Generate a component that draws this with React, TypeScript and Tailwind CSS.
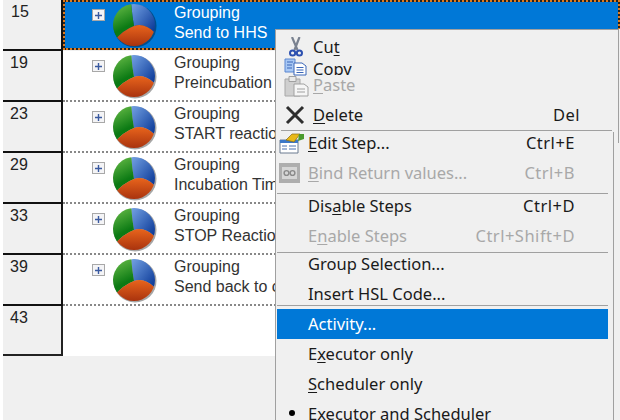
const rows = [
  { num: "15", label: "Send to HHS", selected: true },
  { num: "19", label: "Preincubation" },
  { num: "23", label: "START reaction" },
  { num: "29", label: "Incubation Time" },
  { num: "33", label: "STOP Reaction" },
  { num: "39", label: "Send back to cool" },
];

function Pie({ id }: { id: string }) {
  return (
    <svg width="48" height="48" viewBox="0 0 48 48" className="shrink-0">
      <defs>
        <linearGradient id={`${id}-g`} x1="0.3" y1="0" x2="0.6" y2="1">
          <stop offset="0" stopColor="#70c24c" />
          <stop offset="0.7" stopColor="#0c7a14" />
        </linearGradient>
        <linearGradient id={`${id}-b`} x1="0" y1="0" x2="1" y2="1">
          <stop offset="0" stopColor="#7aa8e8" />
          <stop offset="0.85" stopColor="#0c3a98" />
        </linearGradient>
        <linearGradient id={`${id}-r`} x1="0.5" y1="0" x2="0.5" y2="1">
          <stop offset="0" stopColor="#e8641c" />
          <stop offset="1" stopColor="#a02c0c" />
        </linearGradient>
        <clipPath id={`${id}-c`}>
          <circle cx="24" cy="24" r="21" />
        </clipPath>
      </defs>
      <circle cx="25" cy="25" r="21.5" fill="#000" opacity="0.35" />
      <g clipPath={`url(#${id}-c)`}>
        <path d="M24 25 Q22 14 21 0 H48 V35 Q36 21 24 25Z" fill={`url(#${id}-b)`} />
        <path d="M24 25 Q22 14 21 0 H0 V40 H4 Q13 29 24 25Z" fill={`url(#${id}-g)`} />
        <path d="M24 25 Q36 21 48 35 V48 H0 V44 L4 40 Q13 29 24 25Z" fill={`url(#${id}-r)`} />
      </g>
    </svg>
  );
}

function PlusBox() {
  return (
    <div className="flex h-[12px] w-[13px] items-center justify-center border border-[#a8a8a8] bg-[#f4f4f6]">
      <svg width="9" height="9" viewBox="0 0 9 9">
        <path d="M4.5 1v7M1 4.5h7" stroke="#3a5aa0" strokeWidth="1.4" />
      </svg>
    </div>
  );
}

function Row({ num, label, selected }: { num: string; label: string; selected?: boolean }) {
  return (
    <div className="flex h-[51px]">
      <div
        className={`h-[51px] w-[60px] shrink-0 border-r-2 border-b-2 border-[#111] bg-[#f0f0f0] pt-[2px] leading-[20px] text-[#222] ${
          selected ? "pl-[8px]" : "pl-[7px]"
        }`}
      >
        {num}
      </div>
      {selected ? (
        <div className="h-[50px] flex-1 bg-[#222]">
          <div className="flex h-[50px] border-2 border-dotted border-[#e07a1c] bg-[#0078d7] bg-clip-padding text-white">
            <RowBody id={num} label={label} ml="ml-[27px]" textTop="mt-[1px]" />
          </div>
        </div>
      ) : (
        <div className="flex h-[51px] flex-1 border-b-2 border-dotted border-[#888] bg-white pt-[2px] text-[#333]">
          <RowBody id={num} label={label} ml="ml-[29px]" textTop="mt-0" />
        </div>
      )}
    </div>
  );
}

function RowBody({ id, label, ml, textTop }: { id: string; label: string; ml: string; textTop: string }) {
  return (
    <>
      <div className={`${ml} mt-[7px]`}>
        <PlusBox />
      </div>
      <div className="ml-[5px] -mt-[1px]">
        <Pie id={`p${id}`} />
      </div>
      <div className={`ml-[16px] whitespace-nowrap leading-[20px] ${textTop}`}>
        <div>Grouping</div>
        <div>{label}</div>
      </div>
    </>
  );
}

function Key({ children }: { children: string }) {
  return <span className="underline underline-offset-2">{children}</span>;
}

function Item({
  icon,
  children,
  shortcut,
  disabled,
  h = "h-[30px]",
  pl = "pl-[31px]",
  right = "right-[38px]",
  extra = "",
  active,
}: {
  icon?: React.ReactNode;
  children: React.ReactNode;
  shortcut?: string;
  disabled?: boolean;
  h?: string;
  pl?: string;
  right?: string;
  extra?: string;
  active?: boolean;
}) {
  const color = active ? "bg-[#0078d7] text-white" : disabled ? "text-[#a8a8a8]" : "text-[#1a1a1a]";
  return (
    <div className={`relative flex shrink-0 items-center whitespace-nowrap ${h} ${pl} ${color} ${extra}`}>
      {icon}
      <span>{children}</span>
      {shortcut && <span className={`absolute tracking-[0.5px] ${right}`}>{shortcut}</span>}
    </div>
  );
}

function ScissorsIcon() {
  return (
    <svg width="14" height="20" viewBox="0 0 14 20" className="absolute left-[13px] top-0">
      <path d="M3 0l5.5 13M10.5 0L5.5 13" stroke="#7a8290" strokeWidth="2.2" />
      <circle cx="3.6" cy="16" r="2.6" fill="none" stroke="#2c50b0" strokeWidth="2" />
      <circle cx="10.4" cy="16" r="2.6" fill="none" stroke="#2c50b0" strokeWidth="2" />
    </svg>
  );
}

function CopyIcon() {
  return (
    <svg width="23" height="18" viewBox="0 0 23 18" className="absolute left-[8px] top-[1px]">
      <path d="M1 1h10v13H1z" fill="#a8c8f4" stroke="#5a86d0" />
      <path d="M10 5h8l4 3v9H10z" fill="#fff" stroke="#3a66b8" />
      <path d="M12.5 9.5h7M12.5 12h7M12.5 14.5h7M3 4h6M3 7h5M3 10h5" stroke="#3a66b8" />
    </svg>
  );
}

function PasteIcon() {
  return (
    <svg width="25" height="21" viewBox="0 0 25 21" className="absolute left-[8px] top-0">
      <path d="M1 3h15v17H1z" fill="#cfcfcf" stroke="#a8a8a8" />
      <path d="M5 0.5h7v5H5z" fill="#e8e8e8" stroke="#a0a0a0" />
      <path d="M10 8h10l4 3v9H10z" fill="#f6f6f6" stroke="#a0a0a0" />
      <path d="M13 13h8M13 16h8" stroke="#a0a0a0" />
    </svg>
  );
}

function DeleteIcon() {
  return (
    <svg width="22" height="22" viewBox="0 0 22 22" className="absolute left-[8px] top-[4px]">
      <path d="M3 3l16 16M19 3L3 19" stroke="#2e2e2e" strokeWidth="3" />
    </svg>
  );
}

function EditIcon() {
  return (
    <svg width="26" height="21" viewBox="0 0 26 21" className="absolute left-[2px] top-0">
      <path d="M1 7h18v13H1z" fill="#fff" stroke="#6a7a90" />
      <path d="M1 7h18v3H1z" fill="#3c78c8" />
      <path d="M3 13h5M10 13h7M3 16h5M10 16h7" stroke="#4a70b0" />
      <path d="M7 7l6-6h8l-6 8z" fill="#e8b818" stroke="#8a6a10" strokeWidth="0.7" />
      <path d="M20 1h5v5l-6 2z" fill="#4a9a2c" />
    </svg>
  );
}

function BindIcon() {
  return (
    <svg width="21" height="20" viewBox="0 0 21 20" className="absolute left-[2px] top-[5px]">
      <path d="M0 0h21v20H0z" fill="#aeaeae" />
      <path d="M3 4h15v12H3z" fill="#d6d6d6" />
      <circle cx="7.5" cy="10" r="2.4" fill="none" stroke="#8a8a8a" strokeWidth="1.4" />
      <circle cx="13.5" cy="10" r="2.4" fill="none" stroke="#8a8a8a" strokeWidth="1.4" />
    </svg>
  );
}

function Sep({ cls }: { cls: string }) {
  return <div className={`h-[1px] shrink-0 bg-[#a0a0a0] ${cls}`} />;
}

function ContextMenu() {
  return (
    <div className="absolute left-[275px] top-[29px] h-[391px] w-[345px] overflow-hidden border-l border-[#a0a0a0] bg-[#f0f0f0] font-['Noto_Sans',sans-serif] text-[16.5px]">
      {/* outer menu */}
      <div className="absolute right-[1px] top-0 h-[114px] w-[1px] bg-[#a0a0a0]" />
      <div className="h-[1px] w-[343px] bg-[#a0a0a0]" />
      <div className="flex flex-col pt-[7px]">
        <Item h="h-[20px]" pl="pl-[37px]" icon={<ScissorsIcon />}>
          Cu<Key>t</Key>
        </Item>
        <Item h="h-[19px]" pl="pl-[37px]" icon={<CopyIcon />}>
          <span className="block h-[17px] self-start overflow-hidden leading-[21px]">Copy</span>
        </Item>
        <Item h="h-[18px]" pl="pl-[37px]" disabled icon={<PasteIcon />}>
          <Key>P</Key>aste
        </Item>
        <Item h="h-[30px]" pl="pl-[37px]" extra="mt-[6px]" right="right-[40px]" icon={<DeleteIcon />} shortcut="Del">
          <Key>D</Key>elete
        </Item>
        <Sep cls="ml-[5px] mr-[8px]" />
      </div>
      {/* submenu layered on top */}
      <div className="relative ml-[1px] mr-[6px] mt-[1px] flex flex-col border-r border-[#a0a0a0] pt-[1px]">
        <Item h="h-[20px]" icon={<EditIcon />} shortcut="Ctrl+E">
          <Key>E</Key>dit Step...
        </Item>
        <Item h="h-[30px]" extra="my-[5px]" disabled icon={<BindIcon />} shortcut="Ctrl+B">
          <Key>B</Key>ind Return values...
        </Item>
        <Sep cls="mr-[5px]" />
        <Item h="h-[24px]" shortcut="Ctrl+D">
          Dis<Key>a</Key>ble Steps
        </Item>
        <Item h="h-[30px]" extra="mt-[3px] mb-[1px]" disabled shortcut="Ctrl+Shift+D">
          E<Key>n</Key>able Steps
        </Item>
        <Sep cls="mr-[5px]" />
        <Item h="h-[22px]">Group Selection...</Item>
        <Item h="h-[22px]" extra="mt-[8px]">
          Insert HSL Code...
        </Item>
        <Sep cls="mr-[5px]" />
        <div className="mr-[5px] mt-[3px]">
          <Item h="h-[30px]" active>
            Activity...
          </Item>
        </div>
        <Item h="h-[30px]">
          E<Key>x</Key>ecutor only
        </Item>
        <Item h="h-[30px]">
          <Key>S</Key>cheduler only
        </Item>
        <Item h="h-[30px]" icon={<span className="absolute left-[12px] top-[11px] h-[6px] w-[6px] rounded-full bg-black" />}>
          Executor and Scheduler
        </Item>
      </div>
    </div>
  );
}

export default function App() {
  return (
    <div className="relative h-[420px] w-[620px] overflow-hidden bg-[#f0f0f0] font-['Liberation_Sans',Arial,sans-serif] text-[16px]">
      <div className="absolute bottom-0 left-0 top-0 w-[3px] bg-white" />
      <div className="ml-[3px] flex flex-col">
        {rows.map((r) => (
          <Row key={r.num} {...r} />
        ))}
        <div className="flex h-[50px]">
          <div className="h-[50px] w-[60px] shrink-0 border-r-2 border-b-2 border-[#222] bg-[#f0f0f0] pl-[7px] pt-[2px] leading-[20px] text-[#222]">
            43
          </div>
          <div className="h-[50px] flex-1 bg-white" />
        </div>
      </div>
      <ContextMenu />
    </div>
  );
}
